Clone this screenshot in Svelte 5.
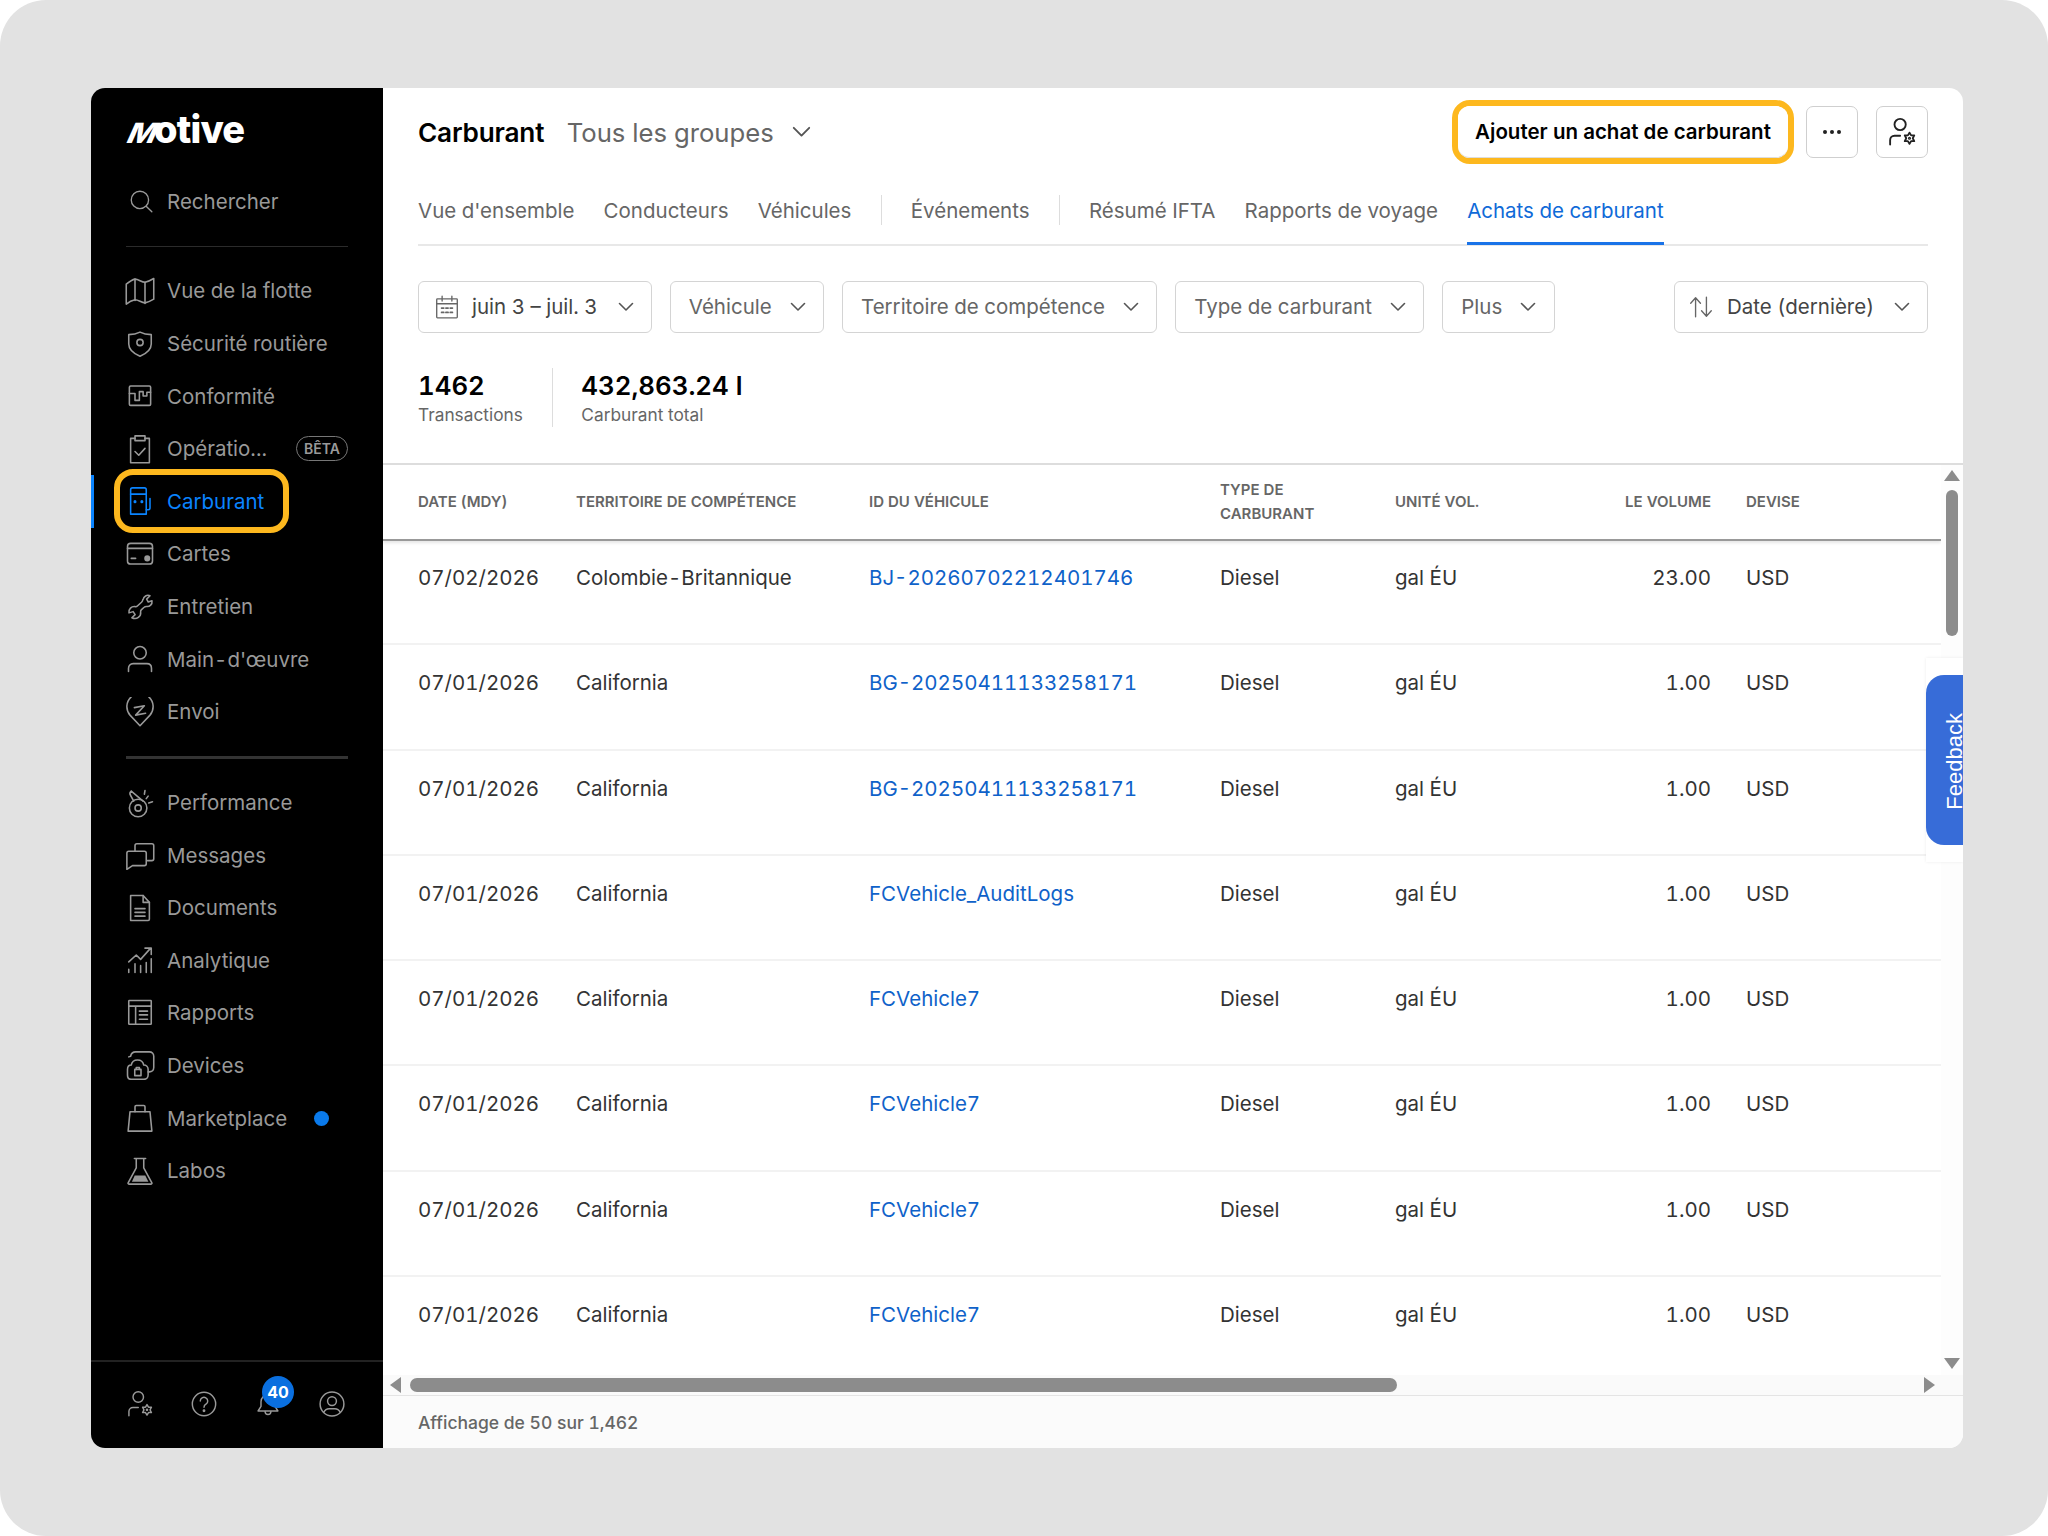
<script>
  const rows = [
    ['07/02/2026', 'Colombie-Britannique', 'BJ-20260702212401746', '23.00'],
    ['07/01/2026', 'California', 'BG-20250411133258171', '1.00'],
    ['07/01/2026', 'California', 'BG-20250411133258171', '1.00'],
    ['07/01/2026', 'California', 'FCVehicle_AuditLogs', '1.00'],
    ['07/01/2026', 'California', 'FCVehicle7', '1.00'],
    ['07/01/2026', 'California', 'FCVehicle7', '1.00'],
    ['07/01/2026', 'California', 'FCVehicle7', '1.00'],
    ['07/01/2026', 'California', 'FCVehicle7', '1.00']
  ];
  const icons = {
    search: '<circle cx="11" cy="11" r="8"/><path d="M17 17l5 5"/>',
    map: '<path d="M1 6.500C3.500 4.500 5.500 3 8 2.500c3 0 5 2.500 8 2.500 2.500-.5 4.500-1.500 7-3v16.500c-2.500 1.500-4.500 2.500-7 3-3 0-5-2.500-8-2.500-2.500.5-4.500 1.500-7 3.500z"/><path d="M8 2.500v17M16 5v17"/>',
    shield: '<path d="M3 4.500c3.500 0 6.500-.7 9-2 2.500 1.300 5.500 2 9 2V12c0 4.300-3.500 7.500-9 9.800C6.500 19.500 3 16.300 3 12z"/><circle cx="12" cy="10.800" r="2.500"/>',
    compliance: '<rect x="3.500" y="4" width="17" height="15.500" rx="1"/><path d="M3.500 10H8v5.500h3.500v-7h3v3.500h3V9h3"/>',
    clipboard: '<path d="M8 3.500H4.500V23h15V3.500H16"/><rect x="8" y="1.500" width="8" height="3.800"/><path d="M8 14l3 3 5-5.500"/>',
    fuel: '<path d="M4.500 22.500V3a1.500 1.500 0 0 1 1.500-1.500h9.500A1.500 1.500 0 0 1 17 3v19.500z"/><path d="M4.500 6.500H17"/><path d="M17 19h1.500c1 0 1.500-.7 1.500-1.500V10"/><circle cx="8" cy="12.500" r=".6" fill="currentColor"/><circle cx="13.500" cy="12.500" r=".6" fill="currentColor"/>',
    card: '<rect x="2" y="3.500" width="20" height="16.500" rx="2.500"/><path d="M2 7.500h20M5 15.500h3.500"/><circle cx="17.800" cy="15.500" r="1.800" fill="currentColor"/>',
    wrench: '<path d="M15 5.500c.4-2.500 3-4 5.500-3l-2.700 2.700 1.300 2.300 3-1c.4 2.800-1.800 5-4.500 4.600-.7 0-1.300.1-1.800.6l-2.300 2.100c-.5.500-.6 1.100-.5 1.800.5 3.300-3 6.500-7 4.500l2.600-2.500-1.600-2.400-3.300 1c-.5-3 2-5.500 5-5 .7.100 1.200 0 1.700-.5l3.300-3c.7-.7 1-1.300 1.100-2.200z" transform="translate(-.5 .5)"/>',
    user: '<circle cx="12" cy="7" r="5"/><path d="M2.800 22v-2.500c0-2.200 1.500-3.800 3.700-3.800h11c2.200 0 3.700 1.600 3.700 3.800V22"/>',
    dispatch: '<path d="M12 23l-8-8.500a10.500 10.500 0 1 1 16 0z"/><path d="M7.500 8.500l8-1.500-7 7.500 8-1.500"/>',
    whistle: '<path d="M5 2.500l9.500 8M5 2.500C3.800 3.500 3.800 5 4.500 6l2.500 4.500"/><circle cx="10.500" cy="16" r="7"/><circle cx="10.500" cy="16" r="2.500"/><path d="M17 8.500l1.500-2M19 12l3-1M15.500 5l.5-3"/>',
    messages: '<path d="M8 8.500V4.500c0-1 .5-1.500 1.500-1.500h12c1 0 1.500.5 1.500 1.500V15c0 1-.5 1.500-1.500 1.500H18"/><path d="M1.500 10.500c0-1 .5-1.500 1.500-1.500h12.500c1 0 1.500.5 1.500 1.500V19c0 1-.5 1.500-1.500 1.500H6l-4.500 3z"/>',
    doc: '<path d="M4.500 2h10l5 5.500V21a1 1 0 0 1-1 1h-14z"/><path d="M14.500 2v5.500h5M8 12.500h8M8 15.500h8M8 18.500h8"/>',
    analytics: '<path d="M3 13.500l6-5.500 3.500 3.500 8-9M16 2.500h5v5"/><path d="M3 22v-2.500M8 22v-7M12.500 22v-5.500M17 22v-8M21 22V11"/>',
    reports: '<rect x="3" y="2" width="18" height="19" rx=".5"/><path d="M3 6.500h18M8.500 6.500V21M11.500 10.500h6.500M11.500 13.500h6.500M11.500 17h6.500"/>',
    devices: '<path d="M3 5.500L4.500 5c.5-2.500 2-3.500 4-3.500h11c2 0 3.500 1.500 3.500 3.500v9c0 2-1.500 3.500-3.500 3.500h-1"/><path d="M2 15.500c0-2 1-3.500 3-3.500 .5-2.500 2.500-4 5-4s4.500 1.500 5 4c2 0 3.500 1.500 3.500 3.500V20c0 2-1.500 3.500-3.500 3.500H5c-2 0-3-1.500-3-3.500z"/><rect x="7.800" y="15.500" width="5" height="5"/><path d="M9 15.500V14h2.500v1.500"/>',
    bag: '<path d="M4 7h16l1.500 15.500h-19z"/><path d="M8 7V3a1 1 0 0 1 1-1h6a1 1 0 0 1 1 1v4"/>',
    flask: '<path d="M7.500 2h9M9 2v7.500L2.500 21.500a.7.7 0 0 0 .6 1h17.800a.7.7 0 0 0 .6-1L15 9.500V2"/><path d="M7.800 15.500h8.400l2.500 5H5.500z" fill="currentColor" stroke="none"/>',
    gear: '<circle cx="10.500" cy="6" r="4.500"/><path d="M2.500 22v-3.500c0-2 1.500-3.500 3.500-3.500h4.500"/><path d="M18 12.500l1.300 2.200h2.500l-1.200 2.300 1.200 2.300h-2.500L18 21.500l-1.300-2.200h-2.500l1.200-2.300-1.200-2.300h2.500z"/><circle cx="18" cy="17" r=".5"/>',
    help: '<circle cx="12" cy="12" r="10"/><path d="M8.800 9.500a3.200 3.200 0 1 1 4.900 2.700c-1.100.7-1.700 1.300-1.700 2.500"/><circle cx="12" cy="17.800" r=".6" fill="currentColor"/>',
    bell: '<path d="M6 10a6 6 0 0 1 12 0v4l2.500 4h-17L6 14z"/><path d="M9.500 18.500a2.500 2.500 0 0 0 5 0"/>',
    account: '<circle cx="12" cy="12" r="10.200"/><circle cx="12" cy="9.500" r="3.800"/><path d="M5 19c1-2 2.500-3 4.500-3h5c2 0 3.500 1 4.500 3"/>',
    calendar: '<rect x="2.500" y="4.500" width="19" height="17.500" rx=".7"/><path d="M2.500 9h19M7.500 2v4.500M16.500 2v4.500"/><path d="M7 13h2M11 13h2M15 13h2M7 17h2M11 17h2M15 17h2" stroke-width="1.600"/>',
    sort: '<path d="M7 21V4M2.500 8.500L7 3.500l4.500 5M17 3v17M12.500 15.500l4.500 5 4.500-5"/>'
  };
  const nav1 = [
    ['map', 'Vue de la flotte'], ['shield', 'Sécurité routière'], ['compliance', 'Conformité'],
    ['clipboard', 'Opératio...', 'beta'], ['fuel', 'Carburant', 'active'], ['card', 'Cartes'],
    ['wrench', 'Entretien'], ['user', "Main-d'œuvre"], ['dispatch', 'Envoi']
  ];
  const nav2 = [
    ['whistle', 'Performance'], ['messages', 'Messages'], ['doc', 'Documents'], ['analytics', 'Analytique'],
    ['reports', 'Rapports'], ['devices', 'Devices'], ['bag', 'Marketplace', 'dot'], ['flask', 'Labos']
  ];
  const tabs1 = ["Vue d'ensemble", 'Conducteurs', 'Véhicules'];
  const tabs2 = ['Résumé IFTA', 'Rapports de voyage'];
  const filters = ['Véhicule', 'Territoire de compétence', 'Type de carburant', 'Plus'];
</script>

{#snippet icon(name, cls = 'ic')}
  <svg class={cls} viewBox="0 0 24 24" fill="none" stroke="currentColor" stroke-width="1.250" stroke-linejoin="round" stroke-linecap="round">{@html icons[name]}</svg>
{/snippet}

{#snippet chevron(cls = 'chev')}
  <svg class={cls} viewBox="0 0 16 10" fill="none" stroke="currentColor" stroke-width="1.600" stroke-linecap="round" stroke-linejoin="round"><path d="M1.500 1.500L8 8l6.500-6.500"/></svg>
{/snippet}

{#snippet navitem(item)}
  <div class="nav" class:active={item[2] === 'active'}>
    {#if item[2] === 'active'}<span class="bar"></span><span class="halo"></span>{/if}
    <span class="nav-icon">{@render icon(item[0])}</span>
    <span class="nav-label">{item[1]}</span>
    {#if item[2] === 'beta'}<span class="beta">BÊTA</span>{/if}
    {#if item[2] === 'dot'}<span class="dot"></span>{/if}
  </div>
{/snippet}

<div class="page">
  <div class="window">
    <aside class="side">
      <div class="logo"><span class="logo-m">M</span>otive</div>
      <div class="nav search">
        <span class="nav-icon">{@render icon('search', 'ic small')}</span>
        <span class="nav-label">Rechercher</span>
      </div>
      <div class="rule r1"></div>
      <div class="group">
        {#each nav1 as item}{@render navitem(item)}{/each}
      </div>
      <div class="rule r2"></div>
      <div class="group">
        {#each nav2 as item}{@render navitem(item)}{/each}
      </div>
      <div class="side-foot">
        <span class="foot-ic">{@render icon('gear', 'ic ft')}</span>
        <span class="foot-ic">{@render icon('help', 'ic ft')}</span>
        <span class="foot-ic bell">{@render icon('bell', 'ic ft')}<span class="badge">40</span></span>
        <span class="foot-ic">{@render icon('account', 'ic ft')}</span>
      </div>
    </aside>

    <main class="main">
      <div class="head">
        <div class="title-row">
          <h1>Carburant</h1>
          <span class="group-select">Tous les groupes</span>
          {@render chevron('chev big')}
          <div class="actions">
            <div class="halo-btn"><button class="btn primary">Ajouter un achat de carburant</button></div>
            <button class="btn square dots"><i></i><i></i><i></i></button>
            <button class="btn square">{@render icon('gear', 'ic dark')}</button>
          </div>
        </div>

        <div class="tabs">
          {#each tabs1 as t}<span class="tab">{t}</span>{/each}
          <span class="tab-sep"></span>
          <span class="tab">Événements</span>
          <span class="tab-sep"></span>
          {#each tabs2 as t}<span class="tab">{t}</span>{/each}
          <span class="tab current">Achats de carburant</span>
        </div>

        <div class="filters">
          <button class="filter date">{@render icon('calendar', 'ic flt')}<span>juin 3 – juil. 3</span>{@render chevron()}</button>
          {#each filters as f}
            <button class="filter">
              <span>{f}</span>{@render chevron()}
            </button>
          {/each}
          <button class="filter sorter">{@render icon('sort', 'ic flt')}<span>Date (dernière)</span>{@render chevron()}</button>
        </div>

        <div class="stats">
          <div class="stat">
            <strong>1462</strong>
            <span>Transactions</span>
          </div>
          <div class="stat second">
            <strong>432,863.24 l</strong>
            <span>Carburant total</span>
          </div>
        </div>
      </div>

      <div class="table-zone">
        <div class="viewport">
          <div class="row header">
            <div class="c date">DATE (MDY)</div>
            <div class="c terr">TERRITOIRE DE COMPÉTENCE</div>
            <div class="c vid">ID DU VÉHICULE</div>
            <div class="c type">TYPE DE<br />CARBURANT</div>
            <div class="c unit">UNITÉ VOL.</div>
            <div class="c vol">LE VOLUME</div>
            <div class="c cur">DEVISE</div>
          </div>
          {#each rows as r}
            <div class="row body">
              <div class="c date">{r[0]}</div>
              <div class="c terr">{r[1]}</div>
              <div class="c vid link">{r[2]}</div>
              <div class="c type">Diesel</div>
              <div class="c unit">gal ÉU</div>
              <div class="c vol">{r[3]}</div>
              <div class="c cur">USD</div>
            </div>
          {/each}
        </div>
        <div class="vtrack">
          <span class="arr up"></span>
          <span class="vthumb"></span>
          <span class="arr down"></span>
        </div>
      </div>

      <div class="htrack">
        <span class="arr left"></span>
        <span class="hthumb"></span>
        <span class="arr right"></span>
      </div>

      <div class="foot">Affichage de 50 sur 1,462</div>

      <div class="feedback"><div class="fb-tab"><span>Feedback</span></div></div>
    </main>
  </div>
</div>

<style>
  :global(body) { margin: 0; background: #fff; }
  * { box-sizing: border-box; }
  .page {
    width: 2048px; height: 1536px; background: #e2e2e2; border-radius: 46px;
    padding: 88px 85px 88px 91px; font-family: Inter, "Liberation Sans", sans-serif; color: #333;
    font-feature-settings: "tnum";
  }
  .window { display: flex; width: 1872px; height: 1360px; background: #fff; border-radius: 14px; overflow: hidden; }

  .side { width: 292px; flex: none; background: #000; display: flex; flex-direction: column; color: #999; }
  .logo {
    height: 60px; margin: 16px 0 0 32px; color: #fff; font-weight: 800; font-size: 38px; line-height: 50px; letter-spacing: -.8px;
    white-space: nowrap; font-feature-settings: normal;
  }
  .logo-m { display: inline-block; width: 31px; transform: skewX(-24deg) scaleX(1.08); transform-origin: left bottom; font-size: 28px; line-height: 1; margin-left: 0; }
  .nav { position: relative; display: flex; align-items: center; height: 52.600px; padding-left: 34px; font-size: 20.500px; color: #999; }
  .nav-icon { width: 42px; flex: none; display: flex; }
  .nav-label { white-space: nowrap; }
  .search { height: 52px; margin-top: 11px; }
  .ic { width: 30px; height: 30px; display: block; }
  .ic.small { width: 26px; height: 26px; margin-left: 3px; }
  .ic.ft { width: 28px; height: 28px; }
  .rule { background: #2b2b2b; flex: none; margin: 0 35px; }
  .r1 { margin-top: 19px; margin-bottom: 17.700px; height: 1px; }
  .r2 { margin-top: 18px; margin-bottom: 17.700px; height: 2.500px; background: #333; }
  .group { flex: none; }
  .nav.active, .nav.active .nav-label { color: #0a84ff; }
  .bar { position: absolute; left: 0; top: 0; width: 3px; height: 100%; background: #0a84ff; }
  .halo { position: absolute; left: 23px; top: -6px; width: 175px; height: 64px; border: 6px solid #fdb81e; border-radius: 19px; }
  .beta { margin-left: 29px; width: 52px; height: 25px; border: 1.500px solid #777; border-radius: 13px; font-size: 14px; font-weight: 600; color: #999; display: flex; align-items: center; justify-content: center; }
  .dot { width: 15px; height: 15px; border-radius: 50%; background: #0a7aeb; margin-left: 27px; }
  .side-foot { margin-top: auto; height: 88px; border-top: 2px solid #222; display: flex; padding: 0 0 0 35px; align-items: center; }
  .foot-ic { position: relative; width: 64px; display: flex; color: #999; padding-bottom: 2px; }
  .bell .badge { position: absolute; left: 8px; top: -14px; width: 32px; height: 32px; border-radius: 50%; background: #0a6fdf; color: #fff; font-size: 16px; font-weight: 700; display: flex; align-items: center; justify-content: center; font-feature-settings: normal; }

  .main { position: relative; flex: 1; display: flex; flex-direction: column; min-width: 0; }
  .head { padding: 0 35px 0 35px; height: 375px; flex: none; }
  .title-row { display: flex; align-items: center; height: 88px; }
  h1 { margin: 0; font-size: 26.200px; font-weight: 600; color: #000; letter-spacing: -.2px; }
  .group-select { margin-left: 22.500px; font-size: 25.700px; color: #666; }
  .chev { width: 16px; height: 10px; flex: none; color: #555; }
  .chev.big { width: 19px; height: 12px; margin-left: 18px; }
  .actions { margin-left: auto; display: flex; align-items: center; }
  .halo-btn { border: 6px solid #fdb81e; border-radius: 18px; width: 342px; height: 64px; background: #fff; padding: 0; margin-right: 12px; }
  .btn { font-family: inherit; height: 52px; background: #fff; border: 1.500px solid #cfcfcf; border-radius: 7px; padding: 0; }
  .primary { width: 100%; height: 100%; border: none; border-bottom: 1.500px solid #ddd; border-radius: 12px; font-size: 20.500px; font-weight: 600; color: #000; white-space: nowrap; }
  .square { width: 52px; display: flex; align-items: center; justify-content: center; margin-left: 18px; }
  .dots { gap: 3px; margin-left: 0; }
  .dots i { width: 4px; height: 4px; background: #222; border-radius: 50%; }
  .ic.dark { color: #222; width: 30px; height: 30px; stroke-width: 1.500; }

  .tabs { display: flex; align-items: center; height: 70px; border-bottom: 2px solid #e8e8e8; gap: 29.200px; }
  .tab { font-size: 20.500px; color: #666; height: 100%; display: flex; align-items: center; white-space: nowrap; }
  .tab.current { color: #0f6ad8; position: relative; }
  .tab.current::after { content: ""; position: absolute; left: 0; right: 0; bottom: -1px; height: 3px; background: #1a73e8; }
  .tab-sep { width: 1px; height: 30px; background: #ddd; margin-bottom: 0; }

  .filters { display: flex; gap: 18px; margin-top: 35px; }
  .filter {
    font-family: inherit; font-feature-settings: inherit; height: 52px; background: #fff; border: 1.500px solid #d4d4d4; border-radius: 6px; font-size: 20.500px; color: #666;
    display: flex; align-items: center; gap: 18px; padding: 0 17.500px 0 17.800px; white-space: nowrap;
  }
  .filter span { line-height: 1; padding-top: 1px; }
  .filter.date { width: 234px; padding-left: 15px; gap: 0; }
  .filter.date span { margin-left: 12px; margin-right: auto; color: #444; }
  .filter .flt { width: 26px; height: 26px; color: #666; flex: none; }
  .sorter { margin-left: auto; width: 254px; gap: 0; padding-left: 13px; }
  .sorter span { margin-left: 13px; margin-right: auto; color: #444; }

  .stats { display: flex; margin-top: 35px; }
  .stat { display: flex; flex-direction: column; padding-right: 29px; }
  .stat strong { font-size: 25.800px; line-height: 36px; font-weight: 600; color: #000; white-space: nowrap; }
  .stat span { font-size: 17.300px; line-height: 22px; color: #666; }
  .second { padding-left: 28.500px; border-left: 1.500px solid #ddd; height: 59px; }

  .table-zone { flex: none; height: 912px; display: flex; border-top: 2px solid #ddd; overflow: hidden; }
  .viewport { flex: 1; min-width: 0; overflow: hidden; }
  .row { display: flex; padding-left: 35px; }
  .header { height: 76px; margin-bottom: -1px; border-bottom: 2px solid #999; box-shadow: 0 2px 3px rgba(0, 0, 0, .1); align-items: center; font-size: 15px; font-weight: 600; color: #666; line-height: 24px; position: relative; }
  .body { height: 105.300px; padding-top: 24px; border-bottom: 2px solid #f2f2f2; font-size: 20.500px; line-height: 28px; color: #333; }
  .c { flex: none; white-space: nowrap; }
  .date { width: 158px; }
  .terr { width: 293px; }
  .vid { width: 351px; }
  .type { width: 175px; }
  .unit { width: 151px; }
  .vol { width: 165px; text-align: right; }
  .cur { margin-left: 35px; }
  .link { color: #0f62c9; }

  .vtrack { width: 22px; flex: none; background: #fdfdfd; display: flex; flex-direction: column; align-items: center; padding: 5px 0 6px; }
  .vthumb { width: 12px; height: 146px; margin-top: 9px; border-radius: 6px; background: #8c8c8c; }
  .arr { display: block; flex: none; background: #8c8c8c; }
  .up { width: 16px; height: 11px; clip-path: polygon(50% 0, 100% 100%, 0 100%); }
  .down { width: 16px; height: 11px; margin-top: auto; clip-path: polygon(0 0, 100% 0, 50% 100%); }
  .htrack { flex: none; height: 20px; background: #fafafa; display: flex; align-items: center; padding: 0 28px 0 7px; }
  .left { width: 11px; height: 16px; clip-path: polygon(100% 0, 100% 100%, 0 50%); }
  .right { width: 11px; height: 16px; margin-left: auto; clip-path: polygon(0 0, 100% 50%, 0 100%); }
  .hthumb { width: 987px; height: 14px; border-radius: 7px; background: #8c8c8c; margin-left: 9px; }
  .foot { flex: 1; border-top: 1.500px solid #e4e4e4; background: #fbfbfb; padding-left: 35px; display: flex; align-items: center; font-size: 17.500px; font-weight: 500; color: #666; }

  .feedback { position: absolute; right: 0; top: 570px; width: 37px; height: 204px; background: #fff; box-shadow: 0 0 3px rgba(0, 0, 0, .08); padding-top: 17px; overflow: hidden; }
  .fb-tab { width: 37px; height: 170px; background: #376cd8; border-radius: 18px 0 0 18px; display: flex; align-items: center; justify-content: flex-end; overflow: hidden; }
  .fb-tab span { writing-mode: vertical-rl; transform: rotate(180deg); font-family: "Liberation Sans", Arial, sans-serif; font-size: 22px; color: #fff; line-height: 21px; margin-right: -2px; padding-bottom: 2px; }
</style>
